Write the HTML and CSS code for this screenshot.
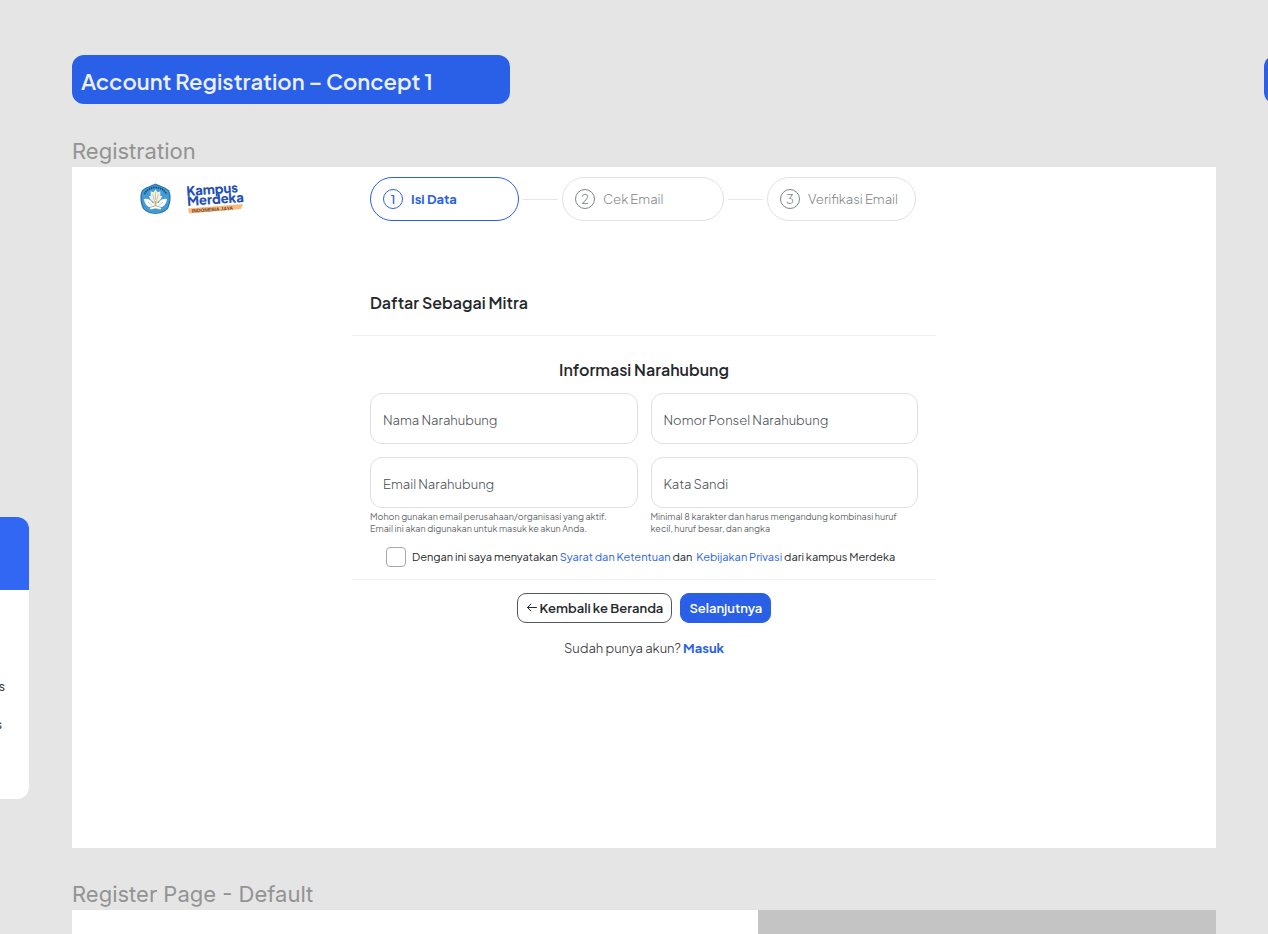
FILE: index.html
```html
<!DOCTYPE html>
<html lang="id">
<head>
<meta charset="utf-8">
<meta name="viewport" content="width=device-width, initial-scale=1">
<title>Account Registration</title>
<link rel="stylesheet" href="styles.css">
</head>
<body>
<div class="canvas">
  <aside class="side-note">
    <div class="side-note-head"></div>
    <p class="side-note-line">s</p>
    <p class="side-note-line second">s</p>
  </aside>
  <div class="next-tag"></div>

  <main class="board">
    <h1 class="tag">Account Registration – Concept 1</h1>

    <h2 class="frame-label">Registration</h2>
    <section class="frame">
      <header class="topbar">
        <div class="logos">
          <svg class="emblem" viewBox="0 0 32 32" role="img" aria-label="Tut Wuri Handayani">
            <path d="M16 0 C20 2 25 3 30 7 C32.500 13 32 19 29 26 C25 30 21 31 16 31.500 C11 31 7 30 3 26 C0 19 -.5 13 2 7 C7 3 12 2 16 0Z" fill="#2f74ad"/>
            <path d="M16 1.200 C20 3 24.500 4 29 7.500 C31 13 30.500 19 28 25.500 C24 29 21 30 16 30.500 C11 30 8 29 4 25.500 C1.500 19 1 13 3 7.500 C7.500 4 12 3 16 1.200Z" fill="#3f9cd8"/>
            <path d="M4.500 11 Q8 4.500 16 4 Q24 4.500 27.500 11" fill="none" stroke="#234d72" stroke-width="1.800" stroke-dasharray="1.600 .7"/>
            <path d="M4 16 Q10 15 13 20 L16 21 L19 20 Q22 15 28 16 Q27 24 20 25 L12 25 Q5 24 4 16Z" fill="#fff"/>
            <path d="M16 6 L18 9 L21 8 L21 13 L23 13 Q21 18 18 19 L18 23 L14 23 L14 19 Q11 18 9 13 L11 13 L11 8 L14 9Z" fill="#f5f0dc"/>
            <path d="M16 9 V17 M13 11 L15 18 M19 11 L17 18 M8 19 L13 23 M24 19 L19 23" stroke="#a3aaa0" stroke-width=".6" fill="none"/>
            <path d="M15 18 H17 L16.700 23 H15.300Z" fill="#d8b53c"/>
            <path d="M9 25 L16 23 L23 25 L21 27 L16 26 L11 27Z" fill="#fff" stroke="#4c6b7c" stroke-width=".5"/>
          </svg>
          <svg class="wordmark" viewBox="0 0 56 32" role="img" aria-label="Kampus Merdeka Indonesia Jaya">
            <path d="M1 25.500 L56 21 L54 26 L2 30.500Z" fill="#f9bb7a"/>
            <g transform="rotate(-4 28 16)">
              <text class="wm-name" x="0" y="11">Kampus</text>
              <text class="wm-name" x="0" y="21">Merdeka</text>
              <text class="wm-sub" x="4" y="28">INDONESIA JAYA</text>
            </g>
          </svg>
        </div>
        <ol class="steps">
          <li class="step current" aria-current="step"><span class="num">1</span>Isi Data</li>
          <li class="link" aria-hidden="true"></li>
          <li class="step wide"><span class="num">2</span>Cek Email</li>
          <li class="link" aria-hidden="true"></li>
          <li class="step"><span class="num">3</span>Verifikasi Email</li>
        </ol>
      </header>

      <form class="form">
        <h3 class="title">Daftar Sebagai Mitra</h3>
        <hr class="rule">
        <h4 class="subtitle">Informasi Narahubung</h4>
        <div class="fields">
          <div class="field"><input class="input" type="text" aria-label="Nama Narahubung" placeholder="Nama Narahubung"></div>
          <div class="field"><input class="input" type="tel" aria-label="Nomor Ponsel Narahubung" placeholder="Nomor Ponsel Narahubung"></div>
          <div class="field">
            <input class="input" type="email" aria-label="Email Narahubung" aria-describedby="email-help" placeholder="Email Narahubung">
            <p class="help" id="email-help">Mohon gunakan email perusahaan/organisasi yang aktif.<br>Email ini akan digunakan untuk masuk ke akun Anda.</p>
          </div>
          <div class="field">
            <input class="input" type="password" aria-label="Kata Sandi" aria-describedby="pass-help" placeholder="Kata Sandi">
            <p class="help" id="pass-help">Minimal 8 karakter dan harus mengandung kombinasi huruf<br>kecil, huruf besar, dan angka</p>
          </div>
        </div>
        <div class="consent">
          <input class="check" type="checkbox" id="agree">
          <label for="agree">Dengan ini saya menyatakan <a href="#terms">Syarat dan Ketentuan</a> dan&nbsp; <a href="#privacy">Kebijakan Privasi</a> dari kampus Merdeka</label>
        </div>
        <hr class="rule">
        <div class="actions">
          <button class="btn" type="button">
            <svg class="arrow" viewBox="0 0 12 12" aria-hidden="true"><path d="M10.500 5.500H1.500M5 2L1.500 5.500L5 9" fill="none" stroke="currentColor" stroke-linecap="round" stroke-linejoin="round"/></svg>
            Kembali ke Beranda
          </button>
          <button class="btn primary" type="submit">Selanjutnya</button>
        </div>
        <p class="login">Sudah punya akun? <a href="#login">Masuk</a></p>
      </form>
    </section>

    <h2 class="frame-label lower">Register Page - Default</h2>
    <section class="frame-next"><div class="frame-next-image"></div></section>
  </main>
</div>
</body>
</html>
```
FILE: styles.css
```css
* { box-sizing: border-box; }

body {
  margin: 0;
  background: #e5e5e5;
  color: #25282b;
  font-family: "Plus Jakarta Sans", Inter, "Liberation Sans", sans-serif;
}

h1, h2, h3, h4, p, ol { margin: 0; padding: 0; font-weight: inherit; }
a { color: #2a5fe8; text-decoration: none; }

.canvas {
  position: relative;
  display: flex;
  min-height: 100vh;
  overflow: hidden;
}

/* Neighbouring canvas items, cut off by the window edges */
.side-note {
  position: absolute;
  left: -271px;
  top: 517px;
  width: 300px;
  height: 282px;
  border-radius: 12px;
  background: #fff;
  overflow: hidden;
  text-align: right;
  font-size: 13px;
  line-height: 20px;
}
.side-note-head { height: 73px; margin-bottom: 86px; background: #3267f4; }
.side-note-line { padding-right: 24px; }
.side-note-line.second { padding: 18px 27px 0 0; }

.next-tag {
  position: absolute;
  left: 1264px;
  top: 55px;
  width: 438px;
  height: 49px;
  border-radius: 12px;
  background: #2a5fe8;
}

.board {
  flex: 1;
  display: flex;
  flex-direction: column;
  padding: 55px 52px 0 72px;
}

.tag {
  width: 438px;
  padding: 3px 9px 0;
  border-radius: 12px;
  background: #2a5fe8;
  color: #eaf0ff;
  font-size: 22px;
  font-weight: 600;
  line-height: 46px;
  white-space: nowrap;
}

.frame-label {
  margin-top: 32px;
  color: #939393;
  font-family: Inter, "Liberation Sans", sans-serif;
  font-size: 22px;
  line-height: 31px;
}
.frame-label.lower { margin-top: 31px; }

.frame { min-height: 681px; background: #fff; }

.topbar {
  display: grid;
  grid-template-columns: 1fr 548px 1fr;
  padding-top: 10px;
}
.logos { display: flex; align-items: center; gap: 16px; padding-left: 68px; }
.emblem { width: 31px; height: 32px; overflow: visible; }
.wordmark { width: 56px; height: 32px; overflow: visible; }
.wm-name { font: 800 13px "Plus Jakarta Sans", Lato, sans-serif; fill: #2450b4; }
.wm-sub { font: 700 5px "Liberation Sans", sans-serif; fill: #71402c; }

.steps { display: flex; align-items: center; list-style: none; }
.step {
  display: flex;
  align-items: center;
  gap: 8px;
  width: 149px;
  height: 44px;
  padding-left: 12px;
  border: 1px solid #e1e2e3;
  border-radius: 22px;
  color: #808487;
  font-size: 13px;
  font-weight: 300;
  white-space: nowrap;
}
.step.wide { width: 162px; }
.step.current { border-color: #2a5fe8; color: #2a5fe8; font-weight: 700; }
.num {
  width: 20px;
  height: 20px;
  border: 1px solid;
  border-radius: 50%;
  line-height: 18px;
  text-align: center;
}
.step.current .num { font-weight: 500; }
.link { width: 35px; height: 1px; margin: 0 4px; background: #e6e6e6; }

.form { width: 548px; margin: 0 auto; }
.title {
  padding-top: 70px;
  font-size: 16px;
  font-weight: 600;
  line-height: 24px;
}
.rule { height: 1px; margin: 20px -18px 0; border: 0; background: #f0f0f1; }
.subtitle {
  padding-top: 22px;
  font-size: 16px;
  font-weight: 600;
  line-height: 24px;
  text-align: center;
}
.fields {
  display: grid;
  grid-template-columns: repeat(2, minmax(0, 1fr));
  gap: 13px;
  padding-top: 11px;
}
.input {
  display: block;
  width: 100%;
  height: 51px;
  padding: 2px 12px 0;
  border: 1px solid #dfe0e1;
  border-radius: 12px;
  background: #fff;
  color: #25282b;
  font: inherit;
  font-size: 13px;
  font-weight: 300;
}
.input::placeholder { color: #484d52; opacity: 1; }
.help {
  padding-top: 3px;
  color: #64686c;
  font-size: 9px;
  font-weight: 400;
  line-height: 12px;
  white-space: nowrap;
}
.consent {
  display: flex;
  align-items: center;
  gap: 6px;
  padding: 12px 16px 0;
  font-size: 11px;
  line-height: 20px;
  white-space: nowrap;
}
.check {
  appearance: none;
  width: 20px;
  height: 20px;
  margin: 0;
  border: 1px solid #a6a8aa;
  border-radius: 4px;
  background: #fff;
}
.consent + .rule { margin-top: 12px; }
.actions { display: flex; justify-content: center; gap: 8px; padding-top: 13px; }
.btn {
  display: flex;
  align-items: center;
  justify-content: center;
  gap: 2px;
  min-width: 91px;
  height: 30px;
  padding: 0 8px;
  border: 1px solid #52575c;
  border-radius: 9px;
  background: #fff;
  color: #25282b;
  font: inherit;
  font-size: 13px;
  font-weight: 600;
  white-space: nowrap;
}
.btn.primary { border-color: #2a5fe8; background: #2a5fe8; color: #fff; }
.arrow { width: 12px; height: 12px; }
.login {
  padding-top: 15px;
  font-size: 13px;
  font-weight: 300;
  line-height: 20px;
  text-align: center;
}
.login a { font-weight: 700; }

.frame-next { flex: 1; display: flex; min-height: 24px; background: #fff; }
.frame-next-image { width: 40%; margin-left: auto; background: #c4c4c4; }
```
